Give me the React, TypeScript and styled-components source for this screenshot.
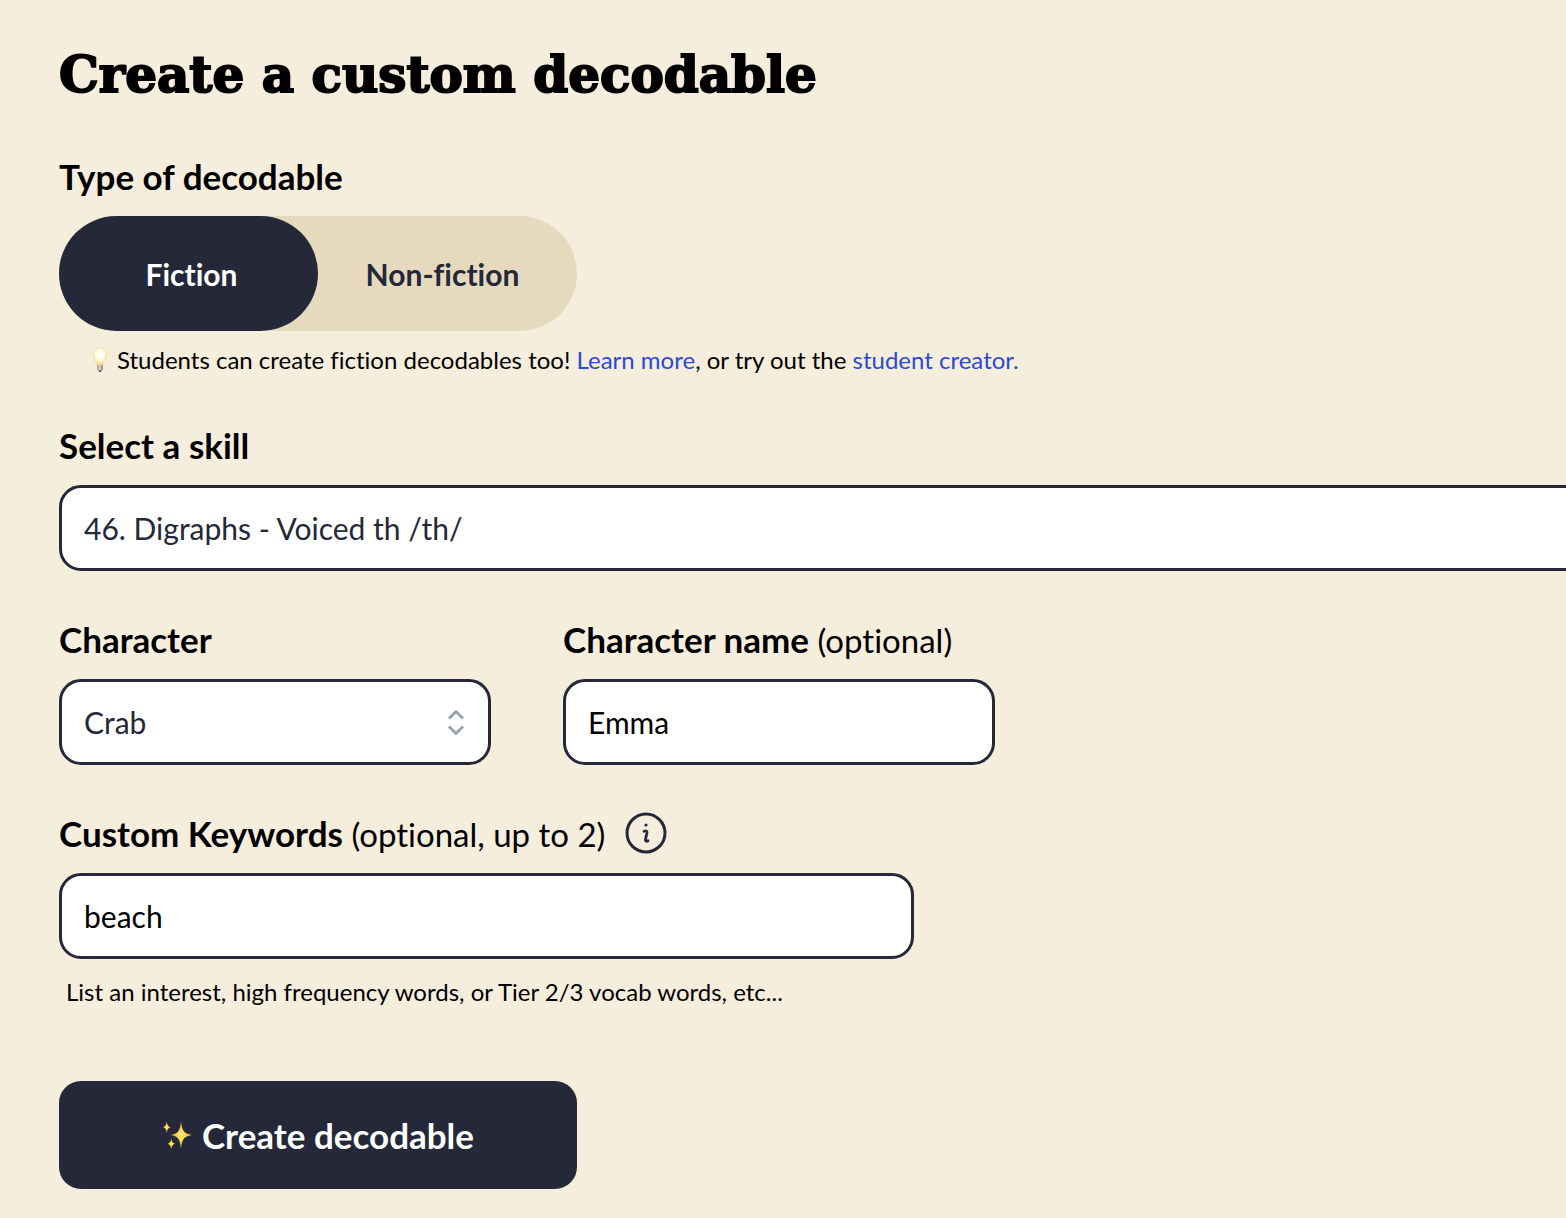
import React, { useState } from "react";
import styled, { createGlobalStyle, css } from "styled-components";

const ink = "#252839";
const sand = "#f6eedd";

const GlobalStyle = createGlobalStyle`
  *, *::before, *::after { box-sizing: border-box; }
  body {
    margin: 0;
    background: ${sand};
    color: #000;
    font-family: Lato, "Open Sans", sans-serif;
    font-variant-ligatures: none;
    overflow-x: hidden;
  }
`;

const Form = styled.form`
  display: flex;
  flex-direction: column;
  gap: 45px;
  padding: 42px 59px 29px;
`;

const Title = styled.h1`
  margin: 0;
  font-family: "DejaVu Serif", serif;
  font-size: 50px;
  font-weight: 700;
  line-height: 66px;
  -webkit-text-stroke: 2px #000;
`;

const Section = styled.section<{ $width?: number }>`
  display: flex;
  flex-direction: column;
  gap: 17px;
  width: ${(p) => (p.$width ? `${p.$width}px` : "auto")};
  max-width: 100%;
`;

const TypeGroup = styled.fieldset`
  margin: 0;
  padding: 0;
  border: 0;
  min-width: 0;
`;

const labelText = css`
  font-size: 35px;
  font-weight: 700;
  line-height: 46px;
`;

const Legend = styled.legend`
  ${labelText}
  padding: 0;
  margin-bottom: 17px;
`;

const Label = styled.label`
  ${labelText}
`;

const Optional = styled.span`
  font-size: 33px;
  font-weight: 400;
  line-height: 1;
`;

const LabelRow = styled.div`
  display: flex;
  align-items: center;
  gap: 20px;
`;

const Toggle = styled.div`
  display: grid;
  grid-template-columns: 1fr 1fr;
  width: 518px;
  max-width: 100%;
  height: 115px;
  border-radius: 58px;
  background: #e5dabd;
`;

const Choice = styled.label`
  display: flex;
  align-items: center;
  justify-content: center;
  border-radius: 58px;
  font-size: 30px;
  font-weight: 700;
  color: ${ink};
  cursor: pointer;

  &:first-child { padding-left: 6px; }
  &:last-child { padding-right: 10px; }

  &:has(input:checked) {
    background: ${ink};
    color: #fff;
  }
`;

const HiddenRadio = styled.input`
  appearance: none;
  width: 0;
  height: 0;
  margin: 0;
`;

const Note = styled.p<{ $indent: number }>`
  display: flex;
  align-items: center;
  margin: 0;
  padding-left: ${(p) => p.$indent}px;
  font-size: 24px;
  line-height: 32px;
`;

const TypeNote = styled(Note)`
  margin-top: 13px;
  margin-bottom: 1px;
  gap: 8px;
`;

const Link = styled.a`
  color: #294bd0;
  text-decoration: none;
`;

const control = css`
  width: 100%;
  height: 86px;
  padding: 0 22px;
  border: 3px solid ${ink};
  border-radius: 22px;
  background: #fff;
  font-family: inherit;
  font-size: 30px;
`;

const TextField = styled.input`
  ${control}
  color: #000;
`;

const Select = styled.select`
  ${control}
  grid-area: 1 / 1;
  appearance: none;
  color: ${ink};
`;

const SelectBox = styled.div<{ $bleed?: boolean }>`
  display: grid;
  align-items: center;
  margin-right: ${(p) => (p.$bleed ? "-120px" : "0")};

  svg {
    grid-area: 1 / 1;
    justify-self: end;
    margin-right: 20px;
    pointer-events: none;
  }
`;

const FieldRow = styled.div`
  display: flex;
  flex-wrap: wrap;
  gap: 45px 72px;
`;

const InfoButton = styled.button`
  display: flex;
  padding: 0;
  border: 0;
  background: none;
  color: ${ink};
  cursor: pointer;
`;

const Submit = styled.button`
  display: flex;
  align-items: center;
  justify-content: center;
  gap: 10px;
  width: 518px;
  max-width: 100%;
  height: 108px;
  margin-top: 28px;
  border: 0;
  border-radius: 22px;
  background: ${ink};
  color: #fff;
  font-family: inherit;
  font-size: 35px;
  font-weight: 700;
  cursor: pointer;
`;

const ChevronsIcon = () => (
  <svg width="30" height="30" viewBox="0 0 30 30" fill="none" stroke="#9ca3af" strokeWidth="3" aria-hidden="true">
    <path d="M8 11.500 15 4.500l7 7M8 19.500l7 7 7-7" strokeLinejoin="round" />
  </svg>
);

const BulbIcon = () => (
  <svg width="18" height="26" viewBox="0 0 18 26" aria-hidden="true">
    <defs>
      <radialGradient id="glow" cx="50%" cy="38%" r="62%">
        <stop offset="0" stopColor="#ffffff" />
        <stop offset="0.5" stopColor="#fffbe6" />
        <stop offset="1" stopColor="#f0d574" />
      </radialGradient>
      <linearGradient id="cap" x1="0" x2="1">
        <stop offset="0" stopColor="#8d8a84" />
        <stop offset="0.45" stopColor="#deddd8" />
        <stop offset="1" stopColor="#77746e" />
      </linearGradient>
    </defs>
    <path d="M9 1C4.800 1 2 4 2 8c0 4.500 3.600 6.200 4.200 10.500h5.600C12.400 14.200 16 12.500 16 8c0-4-2.800-7-7-7z" fill="url(#glow)" stroke="#efdd9c" strokeWidth="0.700" />
    <path d="M6.200 18h5.600v4.200L10.500 24h-3l-1.300-1.800z" fill="url(#cap)" />
    <path d="M7.500 23.500h3L9.800 25H8.200z" fill="#45423e" />
  </svg>
);

const SparklesIcon = () => (
  <svg width="30" height="30" viewBox="0 0 30 30" aria-hidden="true">
    <defs>
      <radialGradient id="spark">
        <stop offset="0" stopColor="#ffe873" />
        <stop offset="0.45" stopColor="#fcd451" />
        <stop offset="1" stopColor="#d98c2b" />
      </radialGradient>
    </defs>
    <g fill="url(#spark)">
      <path d="M19 1c1 9.500 2.500 12.500 11 14-8.500 1.500-10 4.500-11 14-1-9.500-2.500-12.500-10-14 7.500-1.500 9-4.500 10-14z" />
      <path d="M4.800 1c.5 4.200 1.200 5.500 4.200 6.200-3 .7-3.700 2-4.200 6.300-.5-4.300-1.200-5.600-4.300-6.300 3.100-.7 3.800-2 4.300-6.200z" />
      <path d="M9.300 18c.5 4 1.200 5 4.200 5.700-3 .7-3.700 1.800-4.200 6-.5-4.200-1.200-5.300-4.200-6 3-.7 3.700-1.700 4.200-5.700z" />
    </g>
  </svg>
);

const InfoIcon = () => (
  <svg width="42" height="42" viewBox="0 0 42 42" fill="none" stroke="currentColor" aria-hidden="true">
    <circle cx="21" cy="21" r="19" strokeWidth="3" />
    <circle cx="21" cy="13" r="1.600" fill="currentColor" stroke="none" />
    <path d="M19 19.200c1.600-.6 3.300-.4 3 1.600l-1.500 6.400c-.4 2 .8 2.500 2.500 1.600" strokeWidth="2.800" strokeLinecap="round" strokeLinejoin="round" />
  </svg>
);

export default function App() {
  const [kind, setKind] = useState("fiction");
  const [name, setName] = useState("Emma");
  const [keywords, setKeywords] = useState("beach");

  return (
    <>
      <GlobalStyle />
      <Form onSubmit={(e) => e.preventDefault()}>
        <Title>Create a custom decodable</Title>

        <TypeGroup>
          <Legend>Type of decodable</Legend>
          <Toggle>
            <Choice>
              <HiddenRadio type="radio" name="kind" checked={kind === "fiction"} onChange={() => setKind("fiction")} />
              Fiction
            </Choice>
            <Choice>
              <HiddenRadio type="radio" name="kind" checked={kind === "non-fiction"} onChange={() => setKind("non-fiction")} />
              Non-fiction
            </Choice>
          </Toggle>
          <TypeNote $indent={32}>
            <BulbIcon />
            <span>
              Students can create fiction decodables too! <Link href="#learn-more">Learn more</Link>, or try out the{" "}
              <Link href="#student-creator">student creator.</Link>
            </span>
          </TypeNote>
        </TypeGroup>

        <Section>
          <Label htmlFor="skill">Select a skill</Label>
          <SelectBox $bleed>
            <Select id="skill">
              <option>46. Digraphs - Voiced th /th/</option>
            </Select>
            <ChevronsIcon />
          </SelectBox>
        </Section>

        <FieldRow>
          <Section $width={432}>
            <Label htmlFor="character">Character</Label>
            <SelectBox>
              <Select id="character">
                <option>Crab</option>
              </Select>
              <ChevronsIcon />
            </SelectBox>
          </Section>
          <Section $width={432}>
            <Label htmlFor="character-name">
              Character name <Optional>(optional)</Optional>
            </Label>
            <TextField id="character-name" value={name} onChange={(e) => setName(e.target.value)} />
          </Section>
        </FieldRow>

        <Section $width={855}>
          <LabelRow>
            <Label htmlFor="keywords">
              Custom Keywords <Optional>(optional, up to 2)</Optional>
            </Label>
            <InfoButton type="button" aria-label="About custom keywords">
              <InfoIcon />
            </InfoButton>
          </LabelRow>
          <TextField id="keywords" value={keywords} onChange={(e) => setKeywords(e.target.value)} />
          <Note $indent={7}>List an interest, high frequency words, or Tier 2/3 vocab words, etc...</Note>
        </Section>

        <Submit type="submit">
          <SparklesIcon />
          Create decodable
        </Submit>
      </Form>
    </>
  );
}
